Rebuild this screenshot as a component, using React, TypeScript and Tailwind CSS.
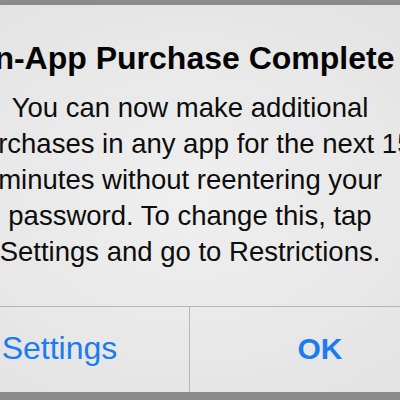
import React from 'react';

const bodyLines = [
  'You can now make additional',
  'purchases in any app for the next 15',
  'minutes without reentering your',
  'password. To change this, tap',
  'Settings and go to Restrictions.',
];

const App: React.FC = () => {
  return (
    <div className="w-[400px] h-[400px] overflow-hidden bg-[#8b8b8b] pt-[5px]" style={{ fontFamily: '"Liberation Sans", Arial, sans-serif' }}>
      {/* Alert panel, wider than the crop */}
      <div className="-ml-[70px] w-[520px] h-[387px] flex flex-col bg-[radial-gradient(ellipse_at_center,#efefef_0%,#e8e8e8_55%,#e1e1e1_100%)]">
        <div className="flex-1 flex flex-col items-center pt-[33px]">
          <h1 className="text-[32px] leading-[40px] font-bold text-[#050505] whitespace-nowrap">
            In-App Purchase Complete
          </h1>
          <div className="mt-[12px] text-[27.5px] leading-[36px] text-[#0d0d0d] text-center">
            {bodyLines.map((line) => (
              <div key={line} className="whitespace-nowrap">{line}</div>
            ))}
          </div>
        </div>

        {/* Buttons */}
        <div className="h-[86px] border-t border-[#b6b6b6] grid grid-cols-2">
          <button className="flex items-center justify-center text-[32px] text-[#1b7cf2] border-r border-[#b6b6b6] pb-[3px]">
            Settings
          </button>
          <button className="flex items-center justify-center text-[30px] font-bold text-[#1b7cf2] pb-[3px]">
            OK
          </button>
        </div>
      </div>
    </div>
  );
};

export default App;
